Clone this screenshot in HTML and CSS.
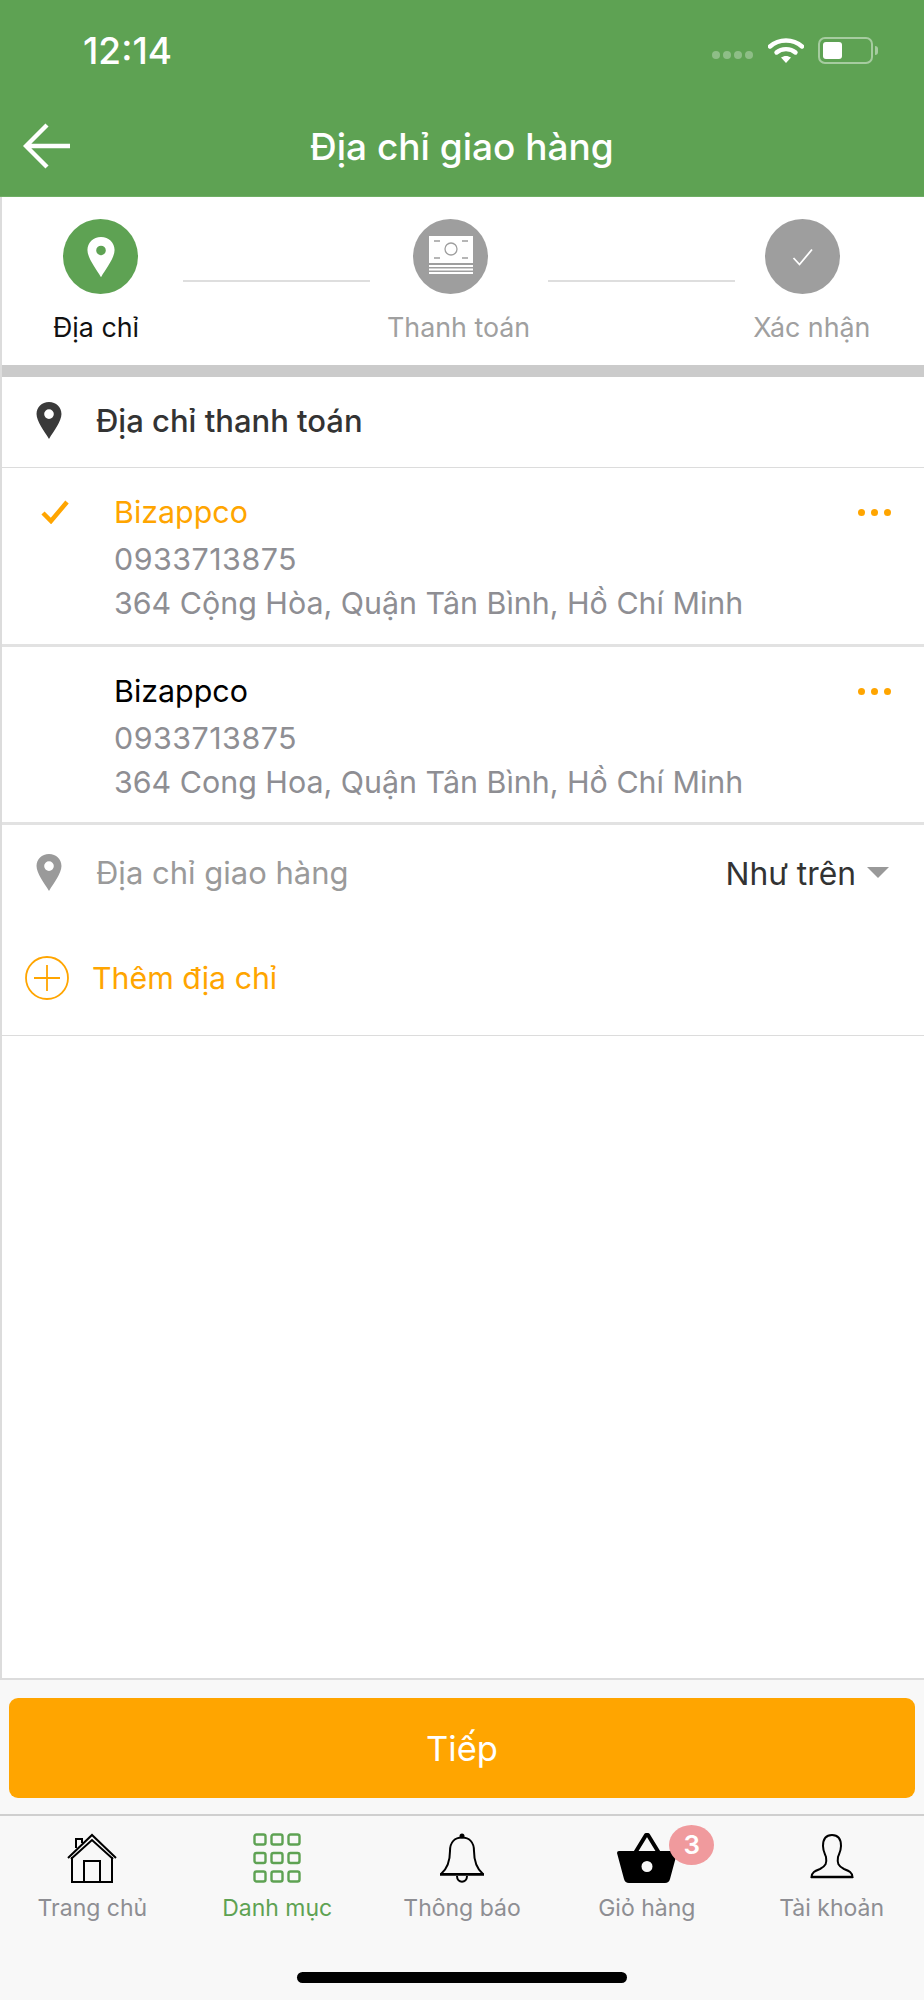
FILE: index.html
```html
<!DOCTYPE html>
<html lang="vi">

<head>
  <meta charset="UTF-8" />
  <title>Địa chỉ giao hàng</title>
  <link rel="stylesheet" href="styles.css">
</head>

<body>
  <div class="screen">

    <header class="top">
      <div class="status">
        <span class="clock">12:14</span>
        <div class="status-icons">
          <span class="signal"><i></i><i></i><i></i><i></i></span>
          <svg class="wifi" width="36" height="27" viewBox="0 0 36 27">
            <path d="M2 9.5C11 1.5 25 1.5 34 9.5" fill="none" stroke="#fff" stroke-width="4.4" stroke-linecap="round" />
            <path d="M8.5 15.5C13.5 11 22.5 11 27.5 15.5" fill="none" stroke="#fff" stroke-width="4.4" stroke-linecap="round" />
            <path d="M13 20.5C16 18.4 20 18.4 23 20.5L18 26Z" fill="#fff" />
          </svg>
          <span class="battery"><i></i></span>
          <span class="battery-cap"></span>
        </div>
      </div>
      <div class="nav">
        <svg class="back" width="48" height="46" viewBox="0 0 48 46">
          <path d="M24 2L3 23L24 44M3 23H47" fill="none" stroke="#fff" stroke-width="4.4" />
        </svg>
        <h1 class="nav-title">Địa chỉ giao hàng</h1>
      </div>
    </header>

    <main class="content">

      <div class="steps">
        <div class="step-icons">
          <span class="circle circle-on">
            <svg width="28" height="42" viewBox="0 0 32 46">
              <path fill-rule="evenodd" d="M16 0C7 0 .5 6.500 .5 15C.5 24 10 36 16 46C22 36 31.500 24 31.500 15C31.500 6.500 25 0 16 0ZM16 10A5.500 5.500 0 1 1 16 21A5.500 5.500 0 1 1 16 10Z" fill="#fff" />
            </svg>
          </span>
          <span class="step-line line-one"></span>
          <span class="circle circle-mid">
            <svg width="44" height="38" viewBox="0 0 44 38">
              <path d="M0 0H44V27H0Z" fill="#fff" />
              <path d="M0 29H44V31H0ZM0 32.500H44V34.500H0ZM0 36H44V38H0Z" fill="#fff" />
              <circle cx="22" cy="13" r="6" fill="none" stroke="#9e9e9e" stroke-width="1.300" />
              <path d="M5 5H11M33 5H39M5 22H11M33 22H39" stroke="#9e9e9e" stroke-width="1.300" />
            </svg>
          </span>
          <span class="step-line line-two"></span>
          <span class="circle circle-last">
            <svg width="22" height="18" viewBox="0 0 22 18">
              <path d="M1.500 10L7.500 16.500L20 1.500" fill="none" stroke="#fff" stroke-width="1.800" />
            </svg>
          </span>
        </div>
        <div class="step-labels">
          <span class="step-label label-on">Địa chỉ</span>
          <span class="step-label label-two">Thanh toán</span>
          <span class="step-label label-three">Xác nhận</span>
        </div>
      </div>

      <div class="band"></div>

      <div class="section-row">
        <svg class="pin" width="28" height="37" viewBox="0 0 32 46">
          <path fill-rule="evenodd" d="M16 0C7 0 .5 6.500 .5 15C.5 24 10 36 16 46C22 36 31.500 24 31.500 15C31.500 6.500 25 0 16 0ZM16 9A6 6 0 1 1 16 21A6 6 0 1 1 16 9Z" fill="#3a3a3a" />
        </svg>
        <span class="section-title">Địa chỉ thanh toán</span>
      </div>

      <div class="address address-first">
        <div class="address-mark">
          <svg width="28" height="24" viewBox="0 0 28 24">
            <path d="M2 13L10 21L26 2" fill="none" stroke="#ffa500" stroke-width="4.500" />
          </svg>
        </div>
        <div class="address-text">
          <div class="address-name name-on">Bizappco</div>
          <div class="address-line address-phone">0933713875</div>
          <div class="address-line">364 Cộng Hòa, Quận Tân Bình, Hồ Chí Minh</div>
        </div>
        <span class="dots"><i></i><i></i><i></i></span>
      </div>

      <div class="address">
        <div class="address-mark"></div>
        <div class="address-text">
          <div class="address-name">Bizappco</div>
          <div class="address-line address-phone">0933713875</div>
          <div class="address-line">364 Cong Hoa, Quận Tân Bình, Hồ Chí Minh</div>
        </div>
        <span class="dots"><i></i><i></i><i></i></span>
      </div>

      <div class="ship-row">
        <svg class="pin" width="28" height="37" viewBox="0 0 32 46">
          <path fill-rule="evenodd" d="M16 0C7 0 .5 6.500 .5 15C.5 24 10 36 16 46C22 36 31.500 24 31.500 15C31.500 6.500 25 0 16 0ZM16 9A6 6 0 1 1 16 21A6 6 0 1 1 16 9Z" fill="#9a9a9a" />
        </svg>
        <span class="ship-title">Địa chỉ giao hàng</span>
        <span class="ship-value">Như trên</span>
        <span class="caret"></span>
      </div>

      <div class="add-row">
        <svg width="44" height="44" viewBox="0 0 44 44">
          <circle cx="22" cy="22" r="21" fill="none" stroke="#ffa500" stroke-width="1.800" />
          <path d="M9 22H35M22 9V35" stroke="#ffa500" stroke-width="1.800" />
        </svg>
        <span class="add-text">Thêm địa chỉ</span>
      </div>

    </main>

    <div class="action">
      <button class="next">Tiếp</button>
    </div>

    <nav class="tabs">
      <div class="tab">
        <svg width="50" height="50" viewBox="0 0 50 50">
          <path d="M1 25L25 2L49 25M9 15V6H15V10M4 26L25 7L46 26" fill="none" stroke="#000" stroke-width="2" />
          <path d="M5 24V49H17V28H33V49H45V24M17 49H33" fill="none" stroke="#000" stroke-width="2" />
        </svg>
        <span class="tab-label">Trang chủ</span>
      </div>
      <div class="tab tab-on">
        <svg width="48" height="50" viewBox="0 0 48 50">
          <g fill="none" stroke="#5ea253" stroke-width="2.400">
            <rect x="1.500" y="1.500" width="11" height="10" rx="2" />
            <rect x="18.500" y="1.500" width="11" height="10" rx="2" />
            <rect x="35.500" y="1.500" width="11" height="10" rx="2" />
            <rect x="1.500" y="20" width="11" height="10" rx="2" />
            <rect x="18.500" y="20" width="11" height="10" rx="2" />
            <rect x="35.500" y="20" width="11" height="10" rx="2" />
            <rect x="1.500" y="38.500" width="11" height="10" rx="2" />
            <rect x="18.500" y="38.500" width="11" height="10" rx="2" />
            <rect x="35.500" y="38.500" width="11" height="10" rx="2" />
          </g>
        </svg>
        <span class="tab-label">Danh mục</span>
      </div>
      <div class="tab">
        <svg width="46" height="50" viewBox="0 0 46 50">
          <path d="M2 41C8 36 11 30 11 18C11 9 16 4.500 23 4.500C30 4.500 35 9 35 18C35 30 38 36 44 41Z" fill="none" stroke="#000" stroke-width="2" stroke-linejoin="round" />
          <path d="M1 41.500H45" stroke="#000" stroke-width="2.400" />
          <circle cx="23" cy="3" r="2.500" fill="#000" />
          <path d="M18 43C18 50.500 28 50.500 28 43" fill="none" stroke="#000" stroke-width="2" />
        </svg>
        <span class="tab-label">Thông báo</span>
      </div>
      <div class="tab">
        <span class="badge">3</span>
        <svg width="60" height="50" viewBox="0 0 60 50">
          <path d="M18 20L29 2H31L42 20" fill="none" stroke="#000" stroke-width="4" stroke-linejoin="round" />
          <path fill-rule="evenodd" d="M2 18H58Q60 18 60 20L53 46Q52 50 48 50H12Q8 50 7 46L0 20Q0 18 2 18ZM30 28A5.500 5.500 0 1 0 30 39A5.500 5.500 0 1 0 30 28Z" fill="#000" />
        </svg>
        <span class="tab-label">Giỏ hàng</span>
      </div>
      <div class="tab">
        <svg width="44" height="50" viewBox="0 2 44 50">
          <path d="M22 4C15 4 13 9 13 15C13 20 15 23 16 26C17 32 16 35 10 38C5 40 2 41 1.500 46H42.500C42 41 39 40 34 38C28 35 27 32 28 26C29 23 31 20 31 15C31 9 29 4 22 4Z" fill="none" stroke="#000" stroke-width="2" />
          <path d="M1 46H43" stroke="#000" stroke-width="2.400" />
        </svg>
        <span class="tab-label">Tài khoản</span>
      </div>
    </nav>

    <div class="home-area"><span class="home-bar"></span></div>

  </div>
</body>

</html>
```

FILE: styles.css
```css
* {
  box-sizing: border-box;
}

body {
  margin: 0;
  font-family: Inter, "Liberation Sans", sans-serif;
}

.screen {
  display: flex;
  flex-direction: column;
  height: 2000px;
  background: #f8f8f8;
}

/* header */
.top {
  height: 197px;
  background: #5ea253;
  border-bottom: 1px solid #6fae65;
  color: #fff;
}

.status {
  display: flex;
  align-items: center;
  justify-content: space-between;
  height: 100px;
  padding: 0 46px 0 83px;
}

.clock {
  font-size: 37px;
  font-weight: 500;
}

.status-icons {
  display: flex;
  align-items: center;
}

.signal {
  display: flex;
  gap: 3px;
  margin-top: 10px;
  margin-right: 15px;
}

.signal i {
  width: 8px;
  height: 8px;
  border-radius: 50%;
  background: rgba(255, 255, 255, 0.3);
}

.battery {
  display: block;
  width: 55px;
  height: 27px;
  margin-left: 14px;
  padding: 3px;
  border: 2px solid rgba(255, 255, 255, 0.45);
  border-radius: 7px;
}

.battery i {
  display: block;
  width: 19px;
  height: 17px;
  background: #fff;
  border-radius: 3px;
}

.battery-cap {
  width: 3px;
  height: 9px;
  margin-left: 2px;
  background: rgba(255, 255, 255, 0.45);
  border-radius: 0 3px 3px 0;
}

.nav {
  display: flex;
  align-items: center;
  height: 96px;
  padding: 0 0 4px 23px;
}

.nav-title {
  margin: 0 0 0 239px;
  font-size: 37px;
  font-weight: 500;
}

/* content */
.content {
  flex: 1;
  background: #fff;
  border-left: 2px solid #dcdcdc;
  border-bottom: 2px solid #dcdcdc;
}

.steps {
  height: 168px;
  padding-top: 22px;
}

.step-icons {
  display: flex;
  align-items: flex-start;
  padding-left: 61px;
}

.circle {
  display: flex;
  align-items: center;
  justify-content: center;
  flex: none;
  width: 75px;
  height: 75px;
  border-radius: 50%;
  background: #9e9e9e;
}

.circle-on {
  background: #5ea253;
}

.circle-mid svg {
  margin-top: -3px;
}

.step-line {
  width: 187px;
  height: 2px;
  margin-top: 61px;
  background: #dedede;
}

.line-one {
  margin-left: 45px;
  margin-right: 43px;
}

.line-two {
  margin-left: 60px;
  margin-right: 30px;
}

.step-labels {
  display: flex;
  margin-top: 16px;
  padding-left: 51px;
  font-size: 26.8px;
  line-height: 34px;
  color: #a0a0a0;
}

.label-on {
  color: #111;
}

.label-two {
  margin-left: 248px;
}

.label-three {
  margin-left: 223px;
}

.band {
  height: 12px;
  background: #cbcbcb;
}

.section-row {
  display: flex;
  align-items: center;
  height: 91px;
  padding: 0 0 4px 33px;
  border-bottom: 1px solid #dcdcdc;
}

.section-title {
  margin-left: 33px;
  font-size: 31px;
  font-weight: 500;
  color: #333;
}

.address {
  display: flex;
  height: 178px;
  padding-top: 20px;
  border-bottom: 3px solid #e2e2e2;
}

.address-first {
  height: 179px;
}

.address-mark {
  flex: none;
  width: 112px;
  padding: 12px 0 0 39px;
}

.address-text {
  flex: 1;
}

.address-name {
  font-size: 30.4px;
  line-height: 49px;
  color: #000;
}

.name-on {
  color: #ffa500;
}

.address-line {
  font-size: 30.4px;
  line-height: 44px;
  color: #8e8e93;
}

.address-phone {
  letter-spacing: 0.5px;
}

.dots {
  display: flex;
  gap: 6px;
  margin: 21px 33px 0 0;
}

.dots i {
  width: 7px;
  height: 7px;
  border-radius: 50%;
  background: #ffa500;
}

.ship-row {
  display: flex;
  align-items: center;
  height: 94px;
  padding: 0 35px 0 33px;
}

.ship-title {
  flex: 1;
  margin-left: 33px;
  font-size: 31px;
  color: #9a9a9a;
}

.ship-value {
  padding-top: 3px;
  font-size: 31.8px;
  color: #333;
}

.caret {
  margin-left: 11px;
  border-left: 11px solid transparent;
  border-right: 11px solid transparent;
  border-top: 11px solid #999;
}

.add-row {
  display: flex;
  align-items: center;
  gap: 23px;
  height: 117px;
  padding: 2px 0 0 23px;
  border-bottom: 1px solid #dcdcdc;
}

.add-text {
  font-size: 30.3px;
  color: #ffa500;
}

/* bottom */
.action {
  padding: 18px 9px 16px;
}

.next {
  display: block;
  width: 100%;
  height: 100px;
  border: 0;
  border-radius: 9px;
  background: #ffa500;
  color: #fff;
  font-family: inherit;
  font-size: 34.5px;
}

.tabs {
  display: flex;
  padding-top: 17px;
  height: 126px;
  border-top: 2px solid #cfcfcf;
}

.tab {
  position: relative;
  display: flex;
  flex: 1;
  flex-direction: column;
  align-items: center;
}

.tab-label {
  margin-top: 9px;
  font-size: 23px;
  line-height: 32px;
  color: #8e8e93;
}

.tab-on .tab-label {
  color: #5ea253;
}

.badge {
  position: absolute;
  top: -8px;
  left: 115px;
  width: 45px;
  height: 40px;
  border-radius: 50%;
  background: #f09a9d;
  color: #fff;
  font-size: 26px;
  font-weight: 600;
  line-height: 40px;
  text-align: center;
}

.home-area {
  display: flex;
  justify-content: center;
  flex: none;
  height: 60px;
  padding-top: 32px;
}

.home-bar {
  width: 330px;
  height: 11px;
  border-radius: 6px;
  background: #000;
}
```
